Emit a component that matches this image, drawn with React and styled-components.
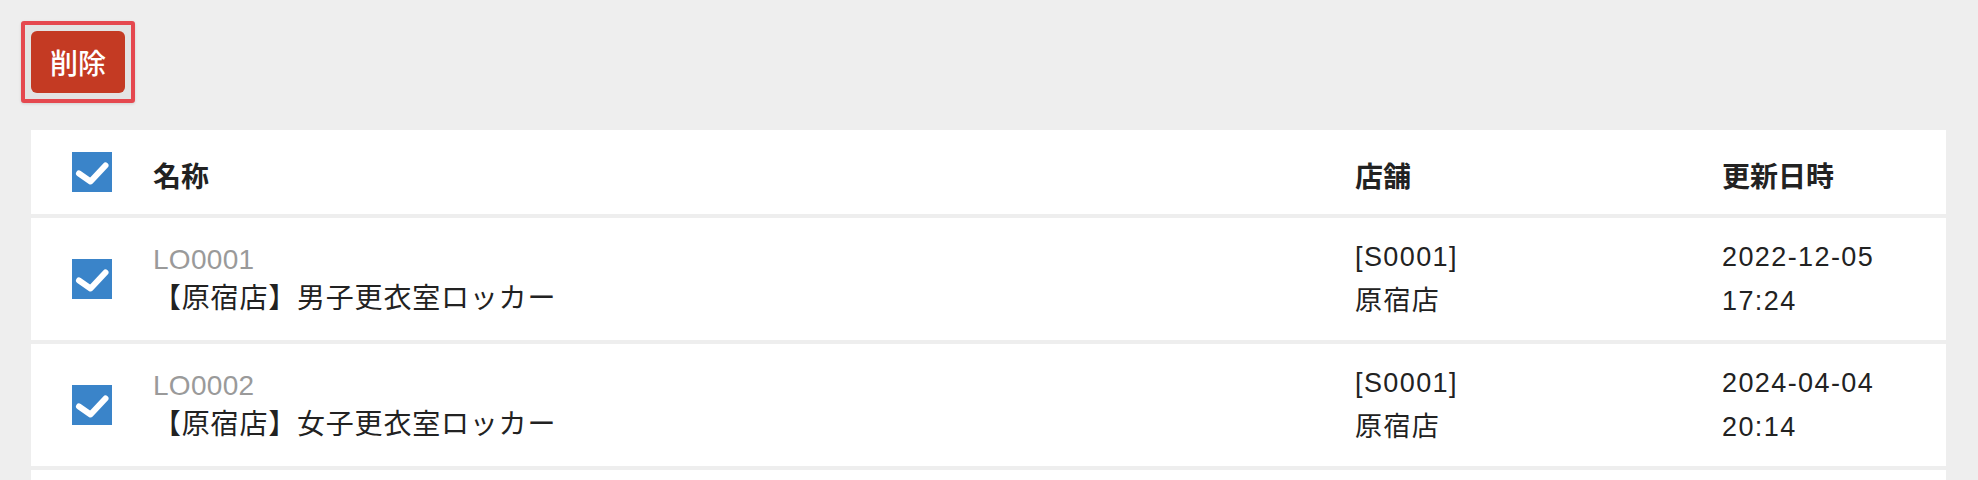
import React from 'react';
import styled, { createGlobalStyle } from 'styled-components';

const GlobalStyle = createGlobalStyle`
  html, body {
    margin: 0;
    background: #eeeeee;
  }
  body {
    font-family: "Liberation Sans", "Noto Sans CJK JP", sans-serif;
    color: #222222;
  }
`;

const Page = styled.div`
  padding: 21px 32px 0 31px;
`;

const Toolbar = styled.div`
  display: flex;
  align-items: center;
  margin-left: -10px;
`;

/* フォーカス中の削除ボタンの枠 */
const FocusRing = styled.span`
  display: inline-flex;
  padding: 6px;
  border: 4px solid #e5484f;
  border-radius: 3px;
  background: #e3e3e3;
  box-shadow: 0 1px 3px rgba(0, 0, 0, 0.12);
`;

const DeleteButton = styled.button`
  width: 94px;
  height: 62px;
  padding: 0;
  border: none;
  border-radius: 6px;
  background: #c43a23;
  color: #ffffff;
  font-family: "Noto Sans CJK JP", sans-serif;
  font-size: 28px;
  font-weight: 500;
  cursor: pointer;
`;

const Card = styled.div`
  margin-top: 27px;
  display: flex;
  flex-direction: column;
  gap: 4px;
`;

const Row = styled.div`
  display: grid;
  grid-template-columns: 122px 1fr 367px 224px;
  align-items: center;
  height: ${props => (props.head ? '84px' : '122px')};
  background: #ffffff;
`;

const CheckCell = styled.div`
  padding-left: 41px;
  display: flex;
  align-items: center;
`;

const HeadText = styled.div`
  font-family: "Liberation Sans", "Noto Sans CJK JP", sans-serif;
  font-size: 28px;
  font-weight: 700;
  color: #222222;
  padding-top: 6px;
`;

const NameCell = styled.div`
  display: flex;
  flex-direction: column;
  padding-top: 2px;
`;

const Code = styled.div`
  font-size: 28px;
  line-height: 38px;
  color: #9a9a9a;
  letter-spacing: 0.3px;
`;

const Name = styled.div`
  font-size: 28px;
  line-height: 40px;
  letter-spacing: 0.8px;
  color: #222222;
`;

const Lines = styled.div`
  font-size: 27px;
  line-height: 44px;
  letter-spacing: 1.4px;
  color: #222222;
`;

const Box = styled.span`
  display: inline-flex;
  width: 40px;
  height: 40px;
  background: #3a84c9;
`;

const Check = () => (
  <Box>
    <svg width="40" height="40" viewBox="0 0 40 40">
      <polyline
        points="7,21.5 18.5,29.5 33.5,13.5"
        fill="none"
        stroke="#ffffff"
        strokeWidth="6"
        strokeLinecap="round"
        strokeLinejoin="round"
      />
    </svg>
  </Box>
);

const rows = [
  { code: 'LO0001', name: '【原宿店】男子更衣室ロッカー', store: '[S0001]', storeName: '原宿店', date: '2022-12-05', time: '17:24' },
  { code: 'LO0002', name: '【原宿店】女子更衣室ロッカー', store: '[S0001]', storeName: '原宿店', date: '2024-04-04', time: '20:14' },
  { code: 'LO0003', name: '【渋谷店】男子更衣室ロッカー', store: '[S0002]', storeName: '渋谷店', date: '2024-04-04', time: '20:15' },
];

const App = () => {
  return (
    <Page>
      <GlobalStyle />
      <Toolbar>
        <FocusRing>
          <DeleteButton>削除</DeleteButton>
        </FocusRing>
      </Toolbar>
      <Card>
        <Row head>
          <CheckCell><Check /></CheckCell>
          <HeadText>名称</HeadText>
          <HeadText>店舗</HeadText>
          <HeadText>更新日時</HeadText>
        </Row>
        {rows.map(r => (
          <Row key={r.code}>
            <CheckCell><Check /></CheckCell>
            <NameCell>
              <Code>{r.code}</Code>
              <Name>{r.name}</Name>
            </NameCell>
            <Lines>
              <div>{r.store}</div>
              <div>{r.storeName}</div>
            </Lines>
            <Lines>
              <div>{r.date}</div>
              <div>{r.time}</div>
            </Lines>
          </Row>
        ))}
      </Card>
    </Page>
  );
};

export default App;
